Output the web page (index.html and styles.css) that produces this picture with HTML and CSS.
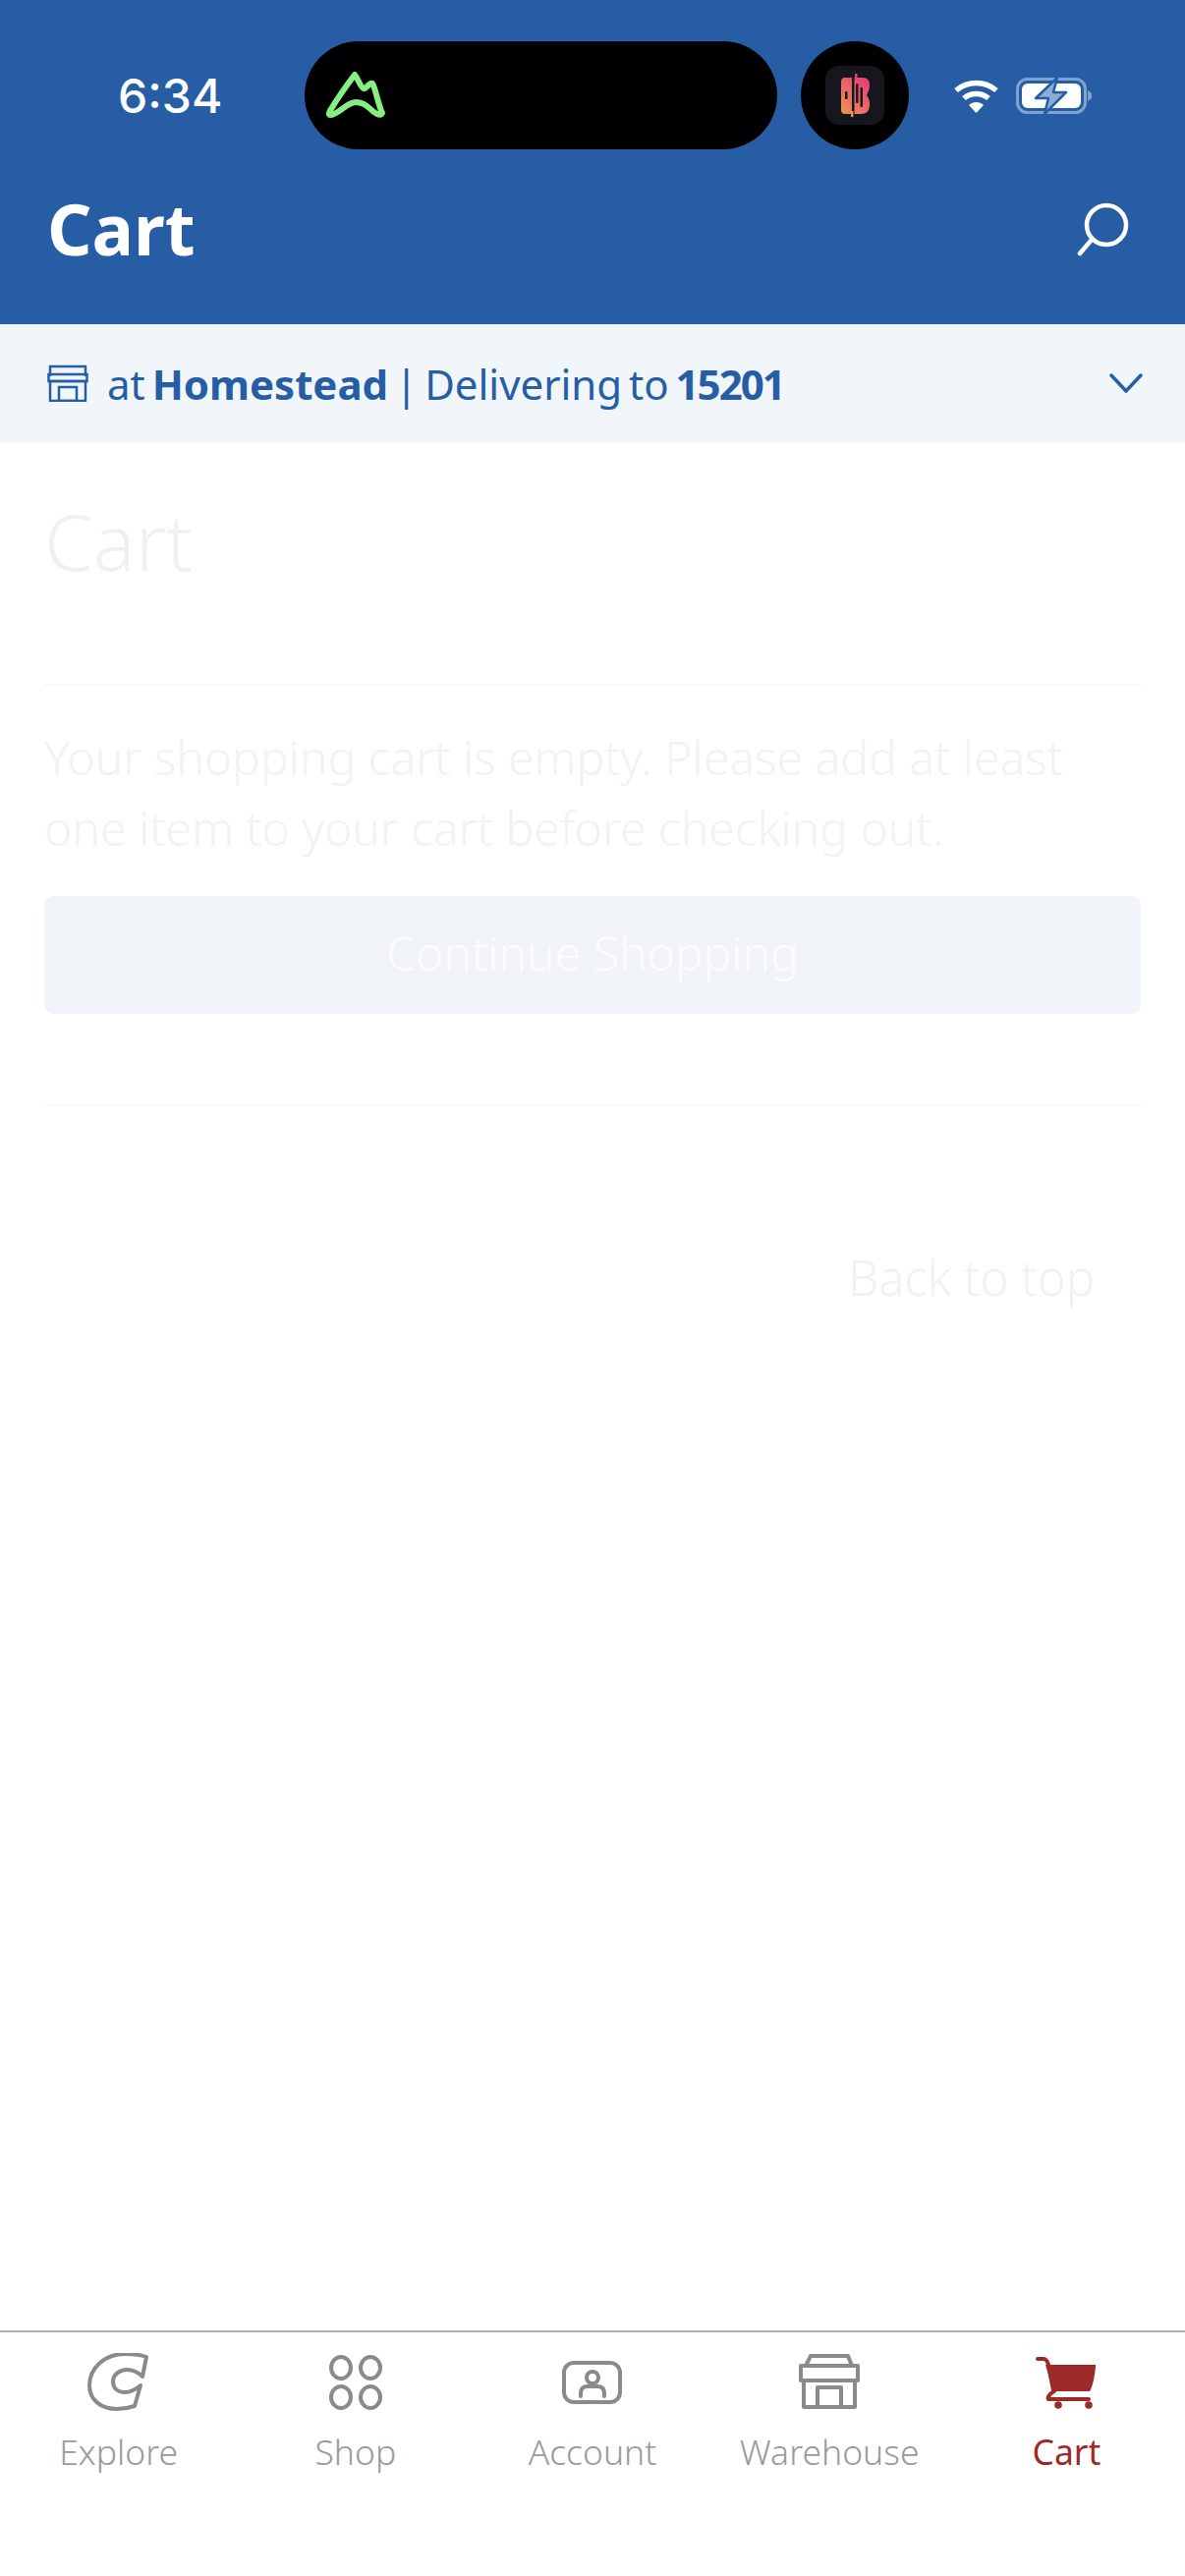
FILE: index.html
```html
<!DOCTYPE html>
<html>
<head>
  <meta charset="UTF-8">
  <meta name="viewport" content="width=device-width, initial-scale=1.0">
  <title>Cart</title>
  <link rel="stylesheet" href="styles.css">
</head>
<body>
<div class="page">
  <header class="topbar">
    <div class="status">
      <span class="time">6:34</span>
      <div class="island">
        <svg class="island-logo" width="62" height="48" viewBox="0 0 62 48">
          <path d="M30 3 C34 8 36 16 39 17 C42 18 45 10 48 12 C51 16 54 34 58 42 C56 46 50 42 46 38 C40 32 36 31 31 31 C22 31 13 44 5 44 C3 44 4 41 6 38 C13 26 24 11 30 3 Z" fill="none" stroke="#86ef80" stroke-width="6" stroke-linejoin="round"/>
        </svg>
      </div>
      <div class="island-dot">
        <svg width="60" height="60" viewBox="0 0 60 60">
          <defs>
            <linearGradient id="bGrad" x1="0.1" y1="1" x2="0.9" y2="0">
              <stop offset="0" stop-color="#ea9350"/>
              <stop offset="1" stop-color="#e83a7c"/>
            </linearGradient>
          </defs>
          <rect width="60" height="60" rx="14" fill="#16161e"/>
          <path d="M20 12 H38 C44 12 45 16 45 20 C45 25 43 27 42 30 C44 32 45 35 45 39 C45 46 42 49 36 49 H20 C17 49 16 47 16 45 V16 C16 14 17 12 20 12 Z" fill="url(#bGrad)"/>
          <rect x="27" y="9" width="2.5" height="42" fill="#16161e"/>
          <rect x="30" y="8" width="2.5" height="6" fill="#e83a7c"/>
          <rect x="26" y="46" width="2.5" height="6" fill="#ea9350"/>
          <rect x="20" y="26" width="2.5" height="8" rx="1" fill="#16161e"/>
          <rect x="31" y="18" width="2.5" height="20" rx="1" fill="#16161e"/>
          <rect x="35.500" y="22" width="2.5" height="20" rx="1" fill="#16161e"/>
        </svg>
      </div>
      <svg class="wifi" width="47" height="35" viewBox="0 0 47 35">
        <path d="M3 12 C15 2 32 2 44 12" fill="none" stroke="#fff" stroke-width="5.500"/>
        <path d="M11 20 C18 14 29 14 36 20" fill="none" stroke="#fff" stroke-width="5.500"/>
        <path d="M16 27 C20 23 27 23 31 27 L23.500 35 Z" fill="#fff"/>
      </svg>
      <svg class="battery" width="79" height="37" viewBox="0 0 79 37">
        <rect x="1.500" y="1.500" width="69" height="34" rx="10" fill="none" stroke="#7ea3cf" stroke-width="3"/>
        <rect x="6" y="6" width="60" height="25" rx="6" fill="#fff"/>
        <path d="M73 13 L77 16 V21 L73 24 Z" fill="#7ea3cf"/>
        <path d="M42 0 L20 21 H33 L29 37 L51 15 H38 Z" fill="#8badd4" stroke="#265da5" stroke-width="2.500" stroke-linejoin="round"/>
      </svg>
    </div>
    <div class="title-row">
      <span class="title">Cart</span>
      <svg class="search" width="54" height="56" viewBox="0 0 54 56">
        <circle cx="30" cy="23" r="20" fill="none" stroke="#fff" stroke-width="4.500"/>
        <path d="M15 38 L3 52" fill="none" stroke="#fff" stroke-width="4.500" stroke-linecap="round"/>
      </svg>
    </div>
  </header>

  <div class="store-strip">
    <svg width="42" height="38" viewBox="0 0 42 38">
      <g fill="none" stroke="#265da5" stroke-width="2.500">
        <path d="M3 12 V2 H39 V12"/>
        <rect x="1.500" y="10" width="39" height="7"/>
        <rect x="3" y="17" width="36" height="20"/>
        <rect x="12" y="23" width="18" height="14"/>
      </g>
    </svg>
    <span>at <b>Homestead</b> | Delivering to <b class="zip">15201</b></span>
    <svg class="chevron" width="34" height="20" viewBox="0 0 34 20">
      <path d="M2 2 L17 18 L32 2" fill="none" stroke="#265da5" stroke-width="3.500" stroke-linecap="round"/>
    </svg>
  </div>

  <main class="content">
    <h1 class="heading">Cart</h1>
    <p class="empty-msg">Your shopping cart is empty. Please add at least one item to your cart before checking out.</p>
    <a class="continue-btn">Continue Shopping</a>
    <div class="back-top"><a>Back to top</a></div>
  </main>

  <nav class="tabs">
    <div class="tab">
      <svg width="64" height="60" viewBox="0 0 64 60">
        <path d="M60 4 C52 1 44 1 38 1 C18 1 2 15 2 33 C2 48 14 57 30 57 C36 57 42 56 48 54 L54 33 C48 38 44 40 38 40 C31 40 26 36 26 29 C26 22 33 17 40 17 C47 17 52 20 56 24 Z" fill="none" stroke="#8a8a8a" stroke-width="4" stroke-linejoin="round"/>
      </svg>
      <span>Explore</span>
    </div>
    <div class="tab">
      <svg width="64" height="60" viewBox="0 0 64 60">
        <g fill="none" stroke="#8a8a8a" stroke-width="4">
          <ellipse cx="17" cy="15" rx="10" ry="11"/>
          <ellipse cx="47" cy="15" rx="10" ry="11"/>
          <ellipse cx="17" cy="45" rx="10" ry="11"/>
          <ellipse cx="47" cy="45" rx="10" ry="11"/>
        </g>
      </svg>
      <span>Shop</span>
    </div>
    <div class="tab">
      <svg width="64" height="60" viewBox="0 0 64 60">
        <g fill="none" stroke="#8a8a8a" stroke-width="4">
          <rect x="3" y="10" width="57" height="40" rx="10"/>
          <circle cx="32" cy="25" r="6"/>
          <path d="M20 44 V41 C20 36 23 34 27 34 H37 C41 34 44 36 44 41 V44" stroke-linecap="round"/>
        </g>
      </svg>
      <span>Account</span>
    </div>
    <div class="tab">
      <svg width="64" height="60" viewBox="0 0 64 60">
        <g fill="none" stroke="#8a8a8a" stroke-width="4" stroke-linejoin="round">
          <path d="M8 13 L13 3 H51 L55 13"/>
          <rect x="3" y="13" width="58" height="15"/>
          <rect x="6" y="28" width="52" height="27"/>
          <rect x="20" y="35" width="24" height="20"/>
        </g>
      </svg>
      <span>Warehouse</span>
    </div>
    <div class="tab tab-active">
      <svg width="64" height="60" viewBox="0 0 64 60">
        <path d="M3 6 H9 C12 6 13 8 14 12 L19 38" fill="none" stroke="#9c2a29" stroke-width="4" stroke-linecap="round"/>
        <path d="M11 12 H62 V14 C61 24 59 34 56 39 H19 Z" fill="#9c2a29"/>
        <path d="M20 39 C14 42 13 46 14 47 H55" fill="none" stroke="#9c2a29" stroke-width="4" stroke-linecap="round"/>
        <circle cx="24" cy="53" r="3.800" fill="#9c2a29"/>
        <circle cx="55" cy="53" r="3.800" fill="#9c2a29"/>
      </svg>
      <span>Cart</span>
    </div>
  </nav>
</div>
</body>
</html>
```

FILE: styles.css
```css
* {
  box-sizing: border-box;
}

body {
  margin: 0;
  background: #fff;
  font-family: "Noto Sans", sans-serif;
}

.page {
  display: flex;
  flex-direction: column;
  height: 2622px;
}

/* blue top area */
.topbar {
  height: 330px;
  background-color: #265da5;
  color: #fff;
  padding-top: 42px;
}

.status {
  display: flex;
  align-items: center;
  height: 110px;
  padding-left: 120px;
}

.time {
  width: 190px;
  font-family: Inter, sans-serif;
  font-size: 48px;
  font-weight: 500;
}

.island {
  display: flex;
  align-items: center;
  width: 481px;
  height: 110px;
  padding-left: 21px;
  background: #000;
  border-radius: 55px;
}

.island-dot {
  display: flex;
  align-items: center;
  justify-content: center;
  width: 110px;
  height: 110px;
  margin-left: 24px;
  background: #000;
  border-radius: 50%;
}

.wifi {
  margin-left: 45px;
}

.battery {
  margin-left: 17px;
}

.title-row {
  display: flex;
  align-items: center;
  justify-content: space-between;
  height: 92px;
  margin-top: 35px;
  padding: 0 56px 0 48px;
}

.title {
  font-size: 71px;
  font-weight: 700;
  line-height: 92px;
}

.search {
  margin-top: 2px;
}

/* store picker */
.store-strip {
  display: flex;
  align-items: center;
  gap: 19px;
  height: 120px;
  padding: 0 43px 0 48px;
  background-color: #f1f6fa;
  color: #265da5;
  font-size: 42px;
  font-weight: 400;
  word-spacing: -4px;
}

.store-strip b {
  font-weight: 700;
}

.store-strip .zip {
  letter-spacing: -2px;
}

.chevron {
  margin-left: auto;
}

/* cart body, washed out while the page loads */
.content {
  flex: 1;
  padding: 0 45px;
}

.heading {
  margin: 0;
  padding: 60px 0 106px;
  border-bottom: 2px solid #f8f8f8;
  color: #f0f0f1;
  font-size: 80px;
  font-weight: 300;
  line-height: 80px;
}

.empty-msg {
  margin: 37px 0 33px;
  color: #f2f2f3;
  font-size: 48px;
  font-weight: 300;
  line-height: 72px;
}

.continue-btn {
  display: block;
  height: 120px;
  background-color: #f0f4f9;
  border-radius: 9px;
  color: #fbfcfe;
  font-size: 48px;
  font-weight: 300;
  line-height: 116px;
  text-align: center;
}

.back-top {
  margin-top: 92px;
  padding: 144px 47px 0 0;
  border-top: 2px solid #f9f9f9;
  color: #eef1f6;
  font-size: 49px;
  font-weight: 300;
  line-height: 60px;
  text-align: right;
}

/* bottom tabs */
.tabs {
  display: grid;
  grid-template-columns: repeat(5, 1fr);
  height: 250px;
  padding-top: 21px;
  border-top: 2px solid #b0b0b0;
}

.tab {
  display: flex;
  flex-direction: column;
  align-items: center;
  color: #9a9a9a;
  font-size: 35.500px;
  font-weight: 300;
  line-height: 50px;
}

.tab span {
  margin-top: 15px;
}

.tab-active {
  color: #9c2a29;
  font-weight: 400;
}
```
